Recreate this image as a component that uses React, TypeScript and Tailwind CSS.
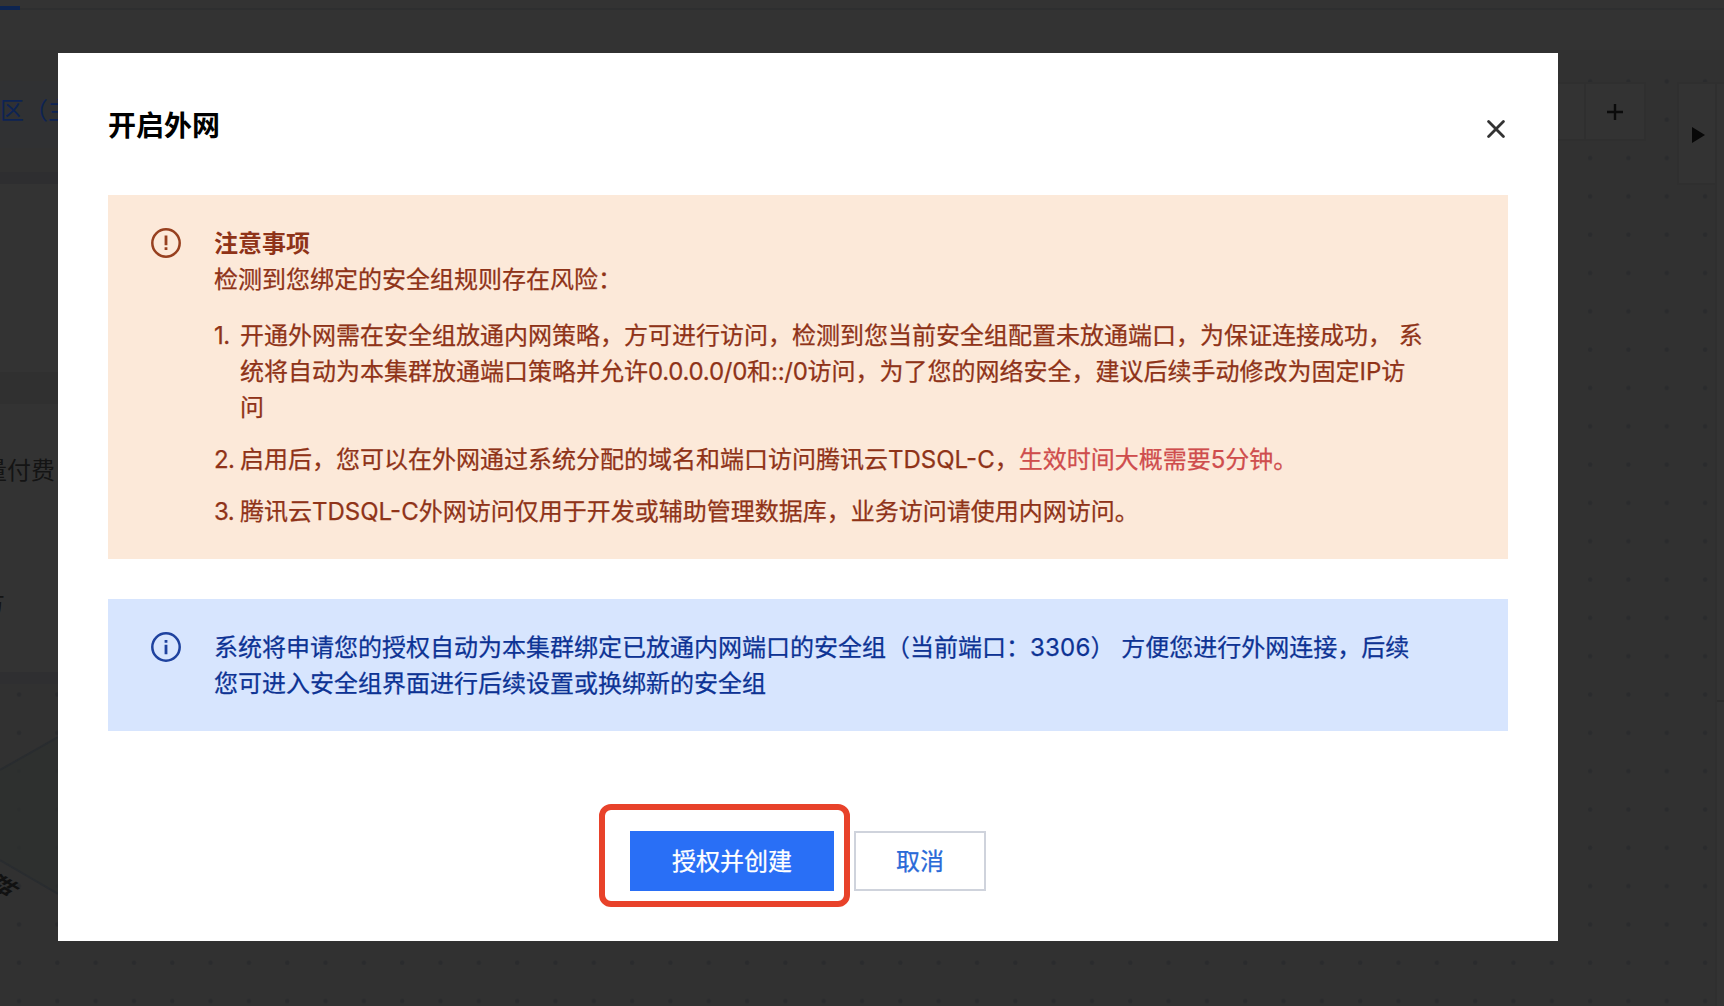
import React from 'react';

/* ---------- 文案 ---------- */
const RULES = [
    <>
        开通外网需在安全组放通内网策略，方可进行访问，检测到您当前安全组配置未放通端口，为保证连接成功， 系<br />
        统将自动为本集群放通端口策略并允许<span className="tracking-[-0.27px]">0.0.0.0/0</span>和
        <span className="tracking-[-0.27px]">::/0</span>访问，为了您的网络安全，建议后续手动修改为固定IP访<br />
        问
    </>,
    <>
        启用后，您可以在外网通过系统分配的域名和端口访问腾讯云TDSQL-C，
        <span className="text-[#cf4d4d]">生效时间大概需要5分钟。</span>
    </>,
    <>腾讯云TDSQL-C外网访问仅用于开发或辅助管理数据库，业务访问请使用内网访问。</>,
];

/* ---------- 图标 ---------- */
function WarnIcon() {
    return (
        <svg className="mt-[3px] size-[30px] shrink-0" viewBox="0 0 30 30" fill="none" stroke="#97401f">
            <circle cx="15" cy="15" r="13.7" strokeWidth="2.5" />
            <path d="M15 7.6v9.6M15 19.2v2.8" strokeWidth="2.8" />
        </svg>
    );
}

function InfoIcon() {
    return (
        <svg className="mt-[3px] size-[30px] shrink-0" viewBox="0 0 30 30" fill="none" stroke="#1e429f">
            <circle cx="15" cy="15" r="13.7" strokeWidth="2.5" />
            <path d="M15 8v2.8M15 12.8v9.4" strokeWidth="2.8" />
        </svg>
    );
}

/* 画布网点 */
function Dots() {
    return (
        <svg className="absolute inset-0 size-full">
            <defs>
                <pattern id="dots" x="0.1" y="12.1" width="38.32" height="38.32" patternUnits="userSpaceOnUse">
                    <circle cx="18.9" cy="19.3" r="2.3" fill="#2a2b2d" />
                </pattern>
            </defs>
            <rect x="0" y="622" width="58" height="334" fill="url(#dots)" />
            <rect x="58" y="892" width="1500" height="64" fill="url(#dots)" />
            <rect x="1558" y="20" width="157" height="936" fill="url(#dots)" />
        </svg>
    );
}

/* ---------- 遮罩后的页面 ---------- */
function Backdrop() {
    return (
        <div className="absolute inset-0 flex flex-col bg-[#333333] text-[24px] leading-9">
            <div className="h-[50px] shrink-0 pt-1.5">
                <div className="h-1 border-b-2 border-[#2e2f30]">
                    <div className="h-1 w-5 bg-[#0d2450]" />
                </div>
            </div>

            <div className="relative flex flex-1 justify-between bg-[#313131]">
                <Dots />

                {/* 左侧卡片 */}
                <div className="relative flex w-[58px] flex-col overflow-hidden whitespace-nowrap pt-[31px] text-[#141414]">
                    <div className="h-[67px] bg-[#303133] pt-3 text-[#0d2353]">区（主</div>
                    <div className="mt-6 h-3 bg-[#2e2e30]" />
                    <div className="h-[188px] bg-[#333333]" />
                    <div className="h-8 bg-[#303030]" />
                    <div className="flex h-[268px] flex-col items-start gap-[97px] bg-[#333333] pt-[49px]">
                        <span className="-ml-[17px]">量付费</span>
                        <span className="-ml-[19px]">方</span>
                    </div>
                    <div className="relative flex-1">
                        <svg className="h-[270px] w-[58px]" viewBox="0 0 58 270" fill="none">
                            <path d="M0 0h58v12H0Z" fill="#2f2f31" />
                            <path d="M0 98L58 65V222L0 188Z" fill="#2e312f" fillOpacity="0.7" />
                            <path d="M0 98L58 65M0 188L58 222" stroke="#292c2f" strokeWidth="2" />
                        </svg>
                        <span className="absolute -left-2 top-[196px] -rotate-[30deg] skew-x-[30deg] font-bold text-[#111111]">
                            群
                        </span>
                    </div>
                </div>

                {/* 右侧工具栏 */}
                <div className="relative flex w-[166px] items-start pt-8">
                    <div className="flex h-[59px] w-[88px] border-2 border-l-0 border-[#2f2f2f] bg-[#333333]">
                        <div className="w-7 border-r-2 border-[#2f2f2f]" />
                        <div className="flex flex-1 items-center justify-center">
                            <svg className="size-4" viewBox="0 0 16 16" stroke="#0b0b0b" strokeWidth="2.4">
                                <path d="M0 8h16M8 0v16" />
                            </svg>
                        </div>
                    </div>
                    <div className="ml-[31px] flex h-[103px] w-[38px] items-center border-2 border-r-0 border-[#2f2f2f] bg-[#333333]">
                        <svg className="ml-[13px] mt-0.5 h-4 w-[13px]" viewBox="0 0 13 16" fill="#080808">
                            <path d="M0 0L13 8L0 16Z" />
                        </svg>
                    </div>
                    <div className="h-full flex-1 border-l-2 border-t-2 border-[#2f2f2f] bg-[#333333]">
                        <div className="h-[618px] border-b-2 border-[#2c2c2c]" />
                    </div>
                </div>
            </div>
        </div>
    );
}

export default function App() {
    return (
        <div className="relative h-[1006px] w-[1724px] overflow-hidden pl-[58px] pt-[53px] font-['Inter','Noto_Sans_CJK_SC',sans-serif]">
            <Backdrop />

            {/* 弹窗 */}
            <div
                role="dialog"
                className="relative h-[888px] w-[1500px] bg-white px-[50px] pt-[50px] text-[24px] leading-9"
            >
                <header className="flex h-[92px] items-start justify-between">
                    <h2 className="pt-px text-[28px] font-bold leading-[44px] text-black">开启外网</h2>
                    <button aria-label="关闭" className="mr-[3px] mt-[17px]">
                        <svg className="size-[18px]" viewBox="0 0 18 18" stroke="#333333" strokeWidth="2.8" strokeLinecap="round">
                            <path d="M1.6 1.6L16.4 16.4M16.4 1.6L1.6 16.4" />
                        </svg>
                    </button>
                </header>

                <section className="flex h-[364px] gap-[33px] whitespace-nowrap bg-[#fce9d9] pl-[43px] pt-[30px] text-[#8f3318]">
                    <WarnIcon />
                    <div className="pt-px [-webkit-text-stroke:0.25px]">
                        <h3 className="font-bold [-webkit-text-stroke:0px]">注意事项</h3>
                        <p>检测到您绑定的安全组规则存在风险：</p>
                        <ol className="mt-5 flex flex-col gap-4">
                            {RULES.map((rule, i) => (
                                <li key={i} className="flex">
                                    <span className="w-[26px] shrink-0 tracking-tight">{i + 1}.</span>
                                    <div>{rule}</div>
                                </li>
                            ))}
                        </ol>
                    </div>
                </section>

                <section className="mt-10 flex h-[132px] gap-[33px] whitespace-nowrap bg-[#d7e5fe] pl-[43px] pt-[30px] text-[#0d3394]">
                    <InfoIcon />
                    <p className="pt-px [-webkit-text-stroke:0.25px]">
                        系统将申请您的授权自动为本集群绑定已放通内网端口的安全组（当前端口：<span className="tracking-[0.2px]">3306</span>） 方便您进行外网连接，后续<br />
                        您可进入安全组界面进行后续设置或换绑新的安全组
                    </p>
                </section>

                <footer className="mt-[100px] flex justify-center gap-5 [-webkit-text-stroke:0.25px]">
                    <div className="relative">
                        <button className="h-[60px] w-[204px] bg-[#296ff6] pt-0.5 text-white">授权并创建</button>
                        {/* 标注框 */}
                        <div className="pointer-events-none absolute -left-[31.5px] -top-[27px] h-[103px] w-[251px] rounded-xl border-6 border-[#e8422a]" />
                    </div>
                    <button className="h-[60px] w-[132px] border-2 border-[#cfd3dc] pt-0.5 text-[#2a6ad8]">取消</button>
                </footer>
            </div>
        </div>
    );
}
